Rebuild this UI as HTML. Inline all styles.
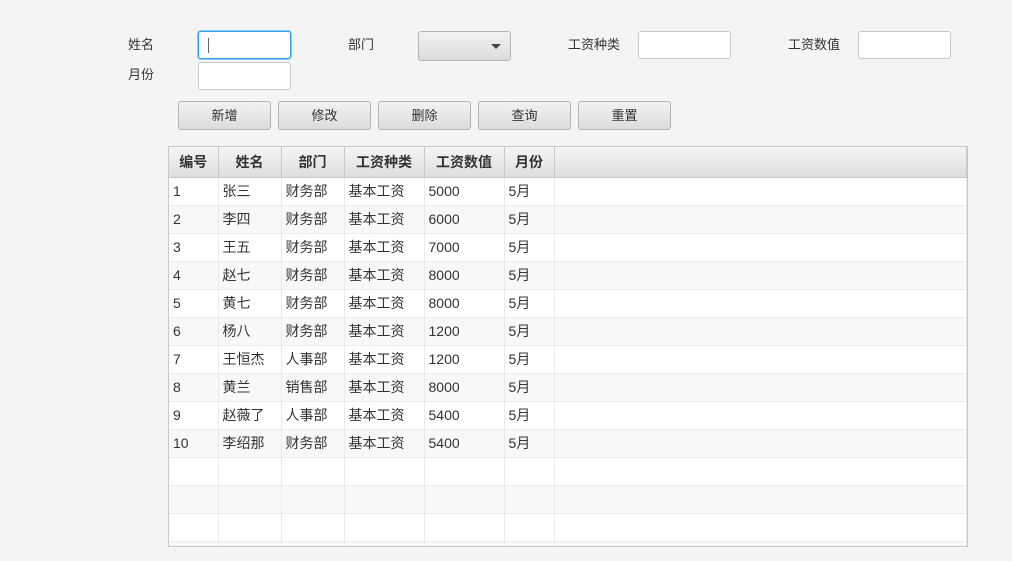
<!DOCTYPE html><html><head><meta charset="utf-8"><style>
body{margin:0;width:1012px;height:561px;background:#f4f4f4;font-family:"Liberation Sans","Noto Sans CJK SC",sans-serif;font-size:13px;color:#333;position:relative;overflow:hidden}
.a{position:absolute}
.lb{position:absolute;font-size:13px;color:#333}
.in{position:absolute;width:93px;height:28px;background:#fff;border:1px solid #c8c8c8;border-radius:3px;box-sizing:border-box}
.bt{position:absolute;top:101px;width:93px;height:29px;box-sizing:border-box;border:1px solid #b5b5b5;border-radius:3px;background:linear-gradient(#f2f2f2,#dcdcdc);text-align:center;line-height:27px;font-size:13px;color:#333}
.wrap{position:absolute;left:168px;top:146px;width:800px;height:401px;border:1px solid #c8c8c8;box-sizing:border-box;overflow:hidden;background:#fff}
table{width:798px;border-collapse:collapse;font-size:14px}
th{height:30px;padding:0;background:linear-gradient(#f5f5f5,#dedede);border-right:1px solid #c8c8c8;border-bottom:1px solid #c8c8c8;font-weight:bold;color:#333;box-sizing:border-box}
td{height:28px;padding:0 0 0 4px;border-right:1px solid #eaeaea;border-bottom:1px solid #ececec;box-sizing:border-box;color:#333}
tr:nth-child(odd) td{background:#f8f8f8}
tr:nth-child(even) td{background:#fff}
</style></head><body>
<div class="lb" style="left:128px;top:34px">姓名</div>
<div class="in" style="left:198px;top:31px;border:1px solid #2b9fe0;box-shadow:0 0 0 1px #8fcaf0"><div class="a" style="left:9px;top:6px;width:1px;height:15px;background:#666"></div></div>
<div class="lb" style="left:128px;top:64px">月份</div>
<div class="in" style="left:198px;top:62px"></div>
<div class="lb" style="left:348px;top:34px">部门</div>
<div class="in" style="left:418px;top:31px;height:30px;background:linear-gradient(#f2f2f2,#dcdcdc);border-color:#b5b5b5"><div class="a" style="left:72px;top:12px;border-left:5px solid transparent;border-right:5px solid transparent;border-top:5px solid #444"></div></div>
<div class="lb" style="left:568px;top:34px">工资种类</div>
<div class="in" style="left:638px;top:31px"></div>
<div class="lb" style="left:788px;top:34px">工资数值</div>
<div class="in" style="left:858px;top:31px"></div>
<div class="bt" style="left:178px">新增</div>
<div class="bt" style="left:278px">修改</div>
<div class="bt" style="left:378px">删除</div>
<div class="bt" style="left:478px">查询</div>
<div class="bt" style="left:578px">重置</div>
<div class="wrap"><table>
<colgroup><col style="width:49px"><col style="width:63px"><col style="width:63px"><col style="width:80px"><col style="width:80px"><col style="width:50px"><col></colgroup>
<tr><th>编号</th><th>姓名</th><th>部门</th><th>工资种类</th><th>工资数值</th><th>月份</th><th></th></tr>
<tr><td>1</td><td>张三</td><td>财务部</td><td>基本工资</td><td>5000</td><td>5月</td><td></td></tr>
<tr><td>2</td><td>李四</td><td>财务部</td><td>基本工资</td><td>6000</td><td>5月</td><td></td></tr>
<tr><td>3</td><td>王五</td><td>财务部</td><td>基本工资</td><td>7000</td><td>5月</td><td></td></tr>
<tr><td>4</td><td>赵七</td><td>财务部</td><td>基本工资</td><td>8000</td><td>5月</td><td></td></tr>
<tr><td>5</td><td>黄七</td><td>财务部</td><td>基本工资</td><td>8000</td><td>5月</td><td></td></tr>
<tr><td>6</td><td>杨八</td><td>财务部</td><td>基本工资</td><td>1200</td><td>5月</td><td></td></tr>
<tr><td>7</td><td>王恒杰</td><td>人事部</td><td>基本工资</td><td>1200</td><td>5月</td><td></td></tr>
<tr><td>8</td><td>黄兰</td><td>销售部</td><td>基本工资</td><td>8000</td><td>5月</td><td></td></tr>
<tr><td>9</td><td>赵薇了</td><td>人事部</td><td>基本工资</td><td>5400</td><td>5月</td><td></td></tr>
<tr><td>10</td><td>李绍那</td><td>财务部</td><td>基本工资</td><td>5400</td><td>5月</td><td></td></tr>
<tr><td></td><td></td><td></td><td></td><td></td><td></td><td></td></tr>
<tr><td></td><td></td><td></td><td></td><td></td><td></td><td></td></tr>
<tr><td></td><td></td><td></td><td></td><td></td><td></td><td></td></tr>
<tr><td></td><td></td><td></td><td></td><td></td><td></td><td></td></tr>
</table></div>
</body></html>
